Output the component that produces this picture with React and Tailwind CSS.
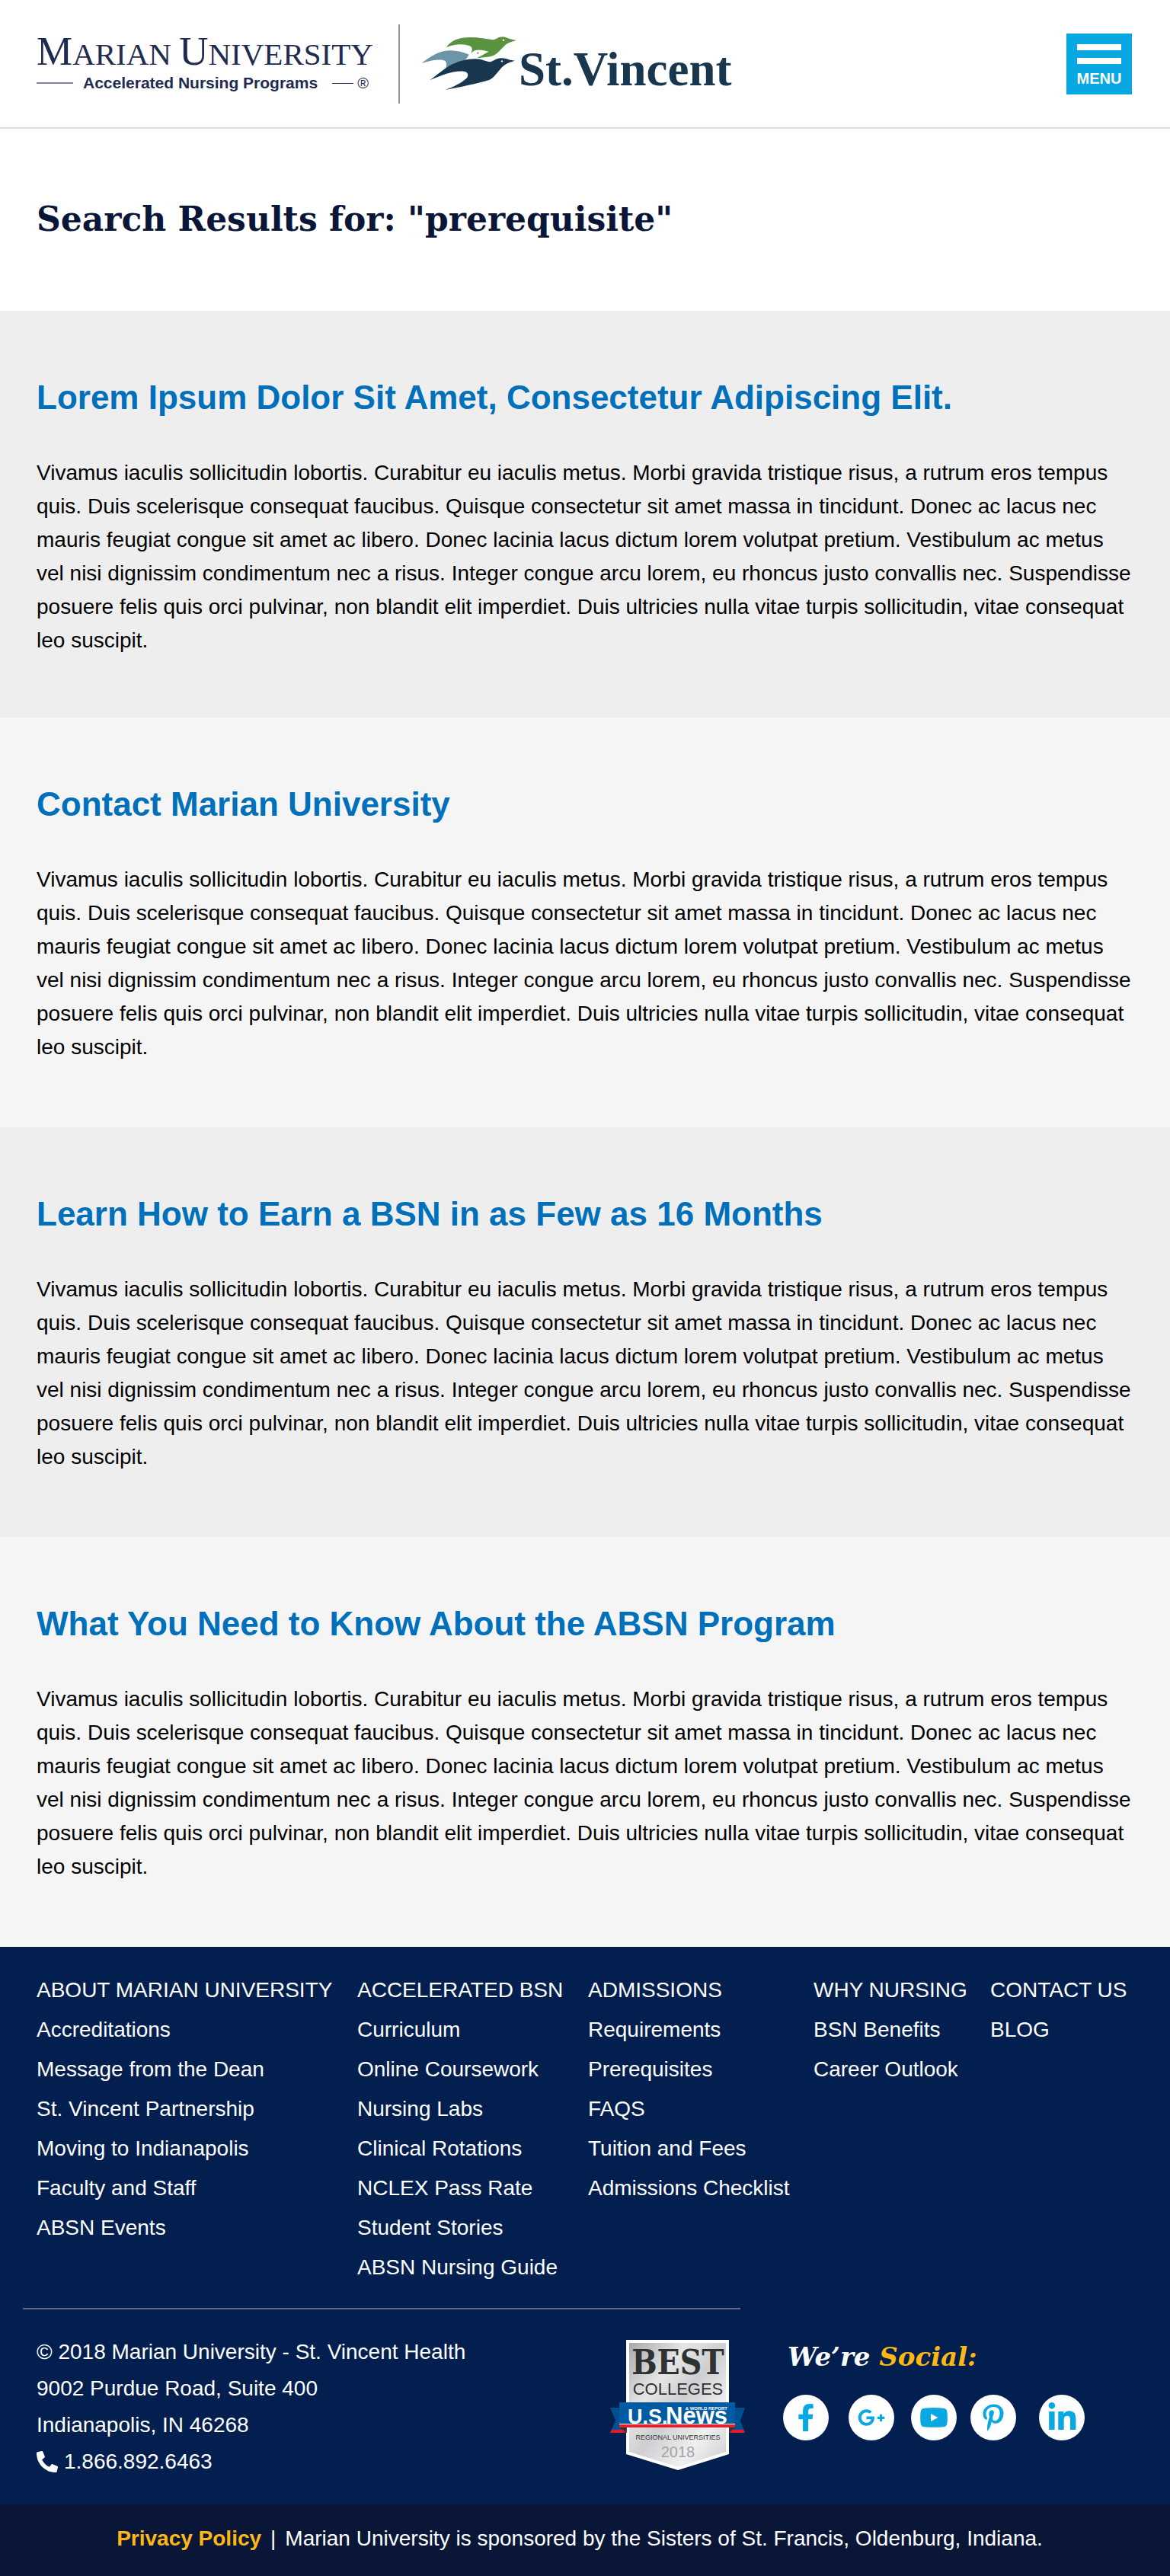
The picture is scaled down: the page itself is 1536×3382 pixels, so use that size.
import { FaFacebookF, FaGooglePlusG, FaPinterestP, FaLinkedinIn, FaPhone } from "react-icons/fa";

const PARAGRAPH =
  "Vivamus iaculis sollicitudin lobortis. Curabitur eu iaculis metus. Morbi gravida tristique risus, a rutrum eros tempus quis. Duis scelerisque consequat faucibus. Quisque consectetur sit amet massa in tincidunt. Donec ac lacus nec mauris feugiat congue sit amet ac libero. Donec lacinia lacus dictum lorem volutpat pretium. Vestibulum ac metus vel nisi dignissim condimentum nec a risus. Integer congue arcu lorem, eu rhoncus justo convallis nec. Suspendisse posuere felis quis orci pulvinar, non blandit elit imperdiet. Duis ultricies nulla vitae turpis sollicitudin, vitae consequat leo suscipit.";

const RESULTS = [
  "Lorem Ipsum Dolor Sit Amet, Consectetur Adipiscing Elit.",
  "Contact Marian University",
  "Learn How to Earn a BSN in as Few as 16 Months",
  "What You Need to Know About the ABSN Program",
];

const COLUMNS = [
  {
    title: "ABOUT MARIAN UNIVERSITY",
    width: "w-[421px]",
    links: ["Accreditations", "Message from the Dean", "St. Vincent Partnership", "Moving to Indianapolis", "Faculty and Staff", "ABSN Events"],
  },
  {
    title: "ACCELERATED BSN",
    width: "w-[303px]",
    links: ["Curriculum", "Online Coursework", "Nursing Labs", "Clinical Rotations", "NCLEX Pass Rate", "Student Stories", "ABSN Nursing Guide"],
  },
  {
    title: "ADMISSIONS",
    width: "w-[296px]",
    links: ["Requirements", "Prerequisites", "FAQS", "Tuition and Fees", "Admissions Checklist"],
  },
  { title: "WHY NURSING", width: "w-[232px]", links: ["BSN Benefits", "Career Outlook"] },
  { title: "CONTACT US", width: "", links: ["BLOG"] },
];

function Birds() {
  return (
    <svg viewBox="150 140 381 219" className="h-[73px] w-[127px] shrink-0" aria-hidden="true">
      <path
        fill="#5a9340"
        d="M252 185C268 160 300 146 345 146C380 146 410 152 436 156C450 154 456 144 473 144C486 144 492 150 504 153L527 158C515 163 500 164 488 173C468 190 452 216 428 221C412 225 392 226 373 227C390 219 402 210 419 202C404 200 392 195 376 196C362 196 356 202 349 209C355 196 356 186 344 180C318 168 280 174 252 185Z"
      />
      <circle cx="477" cy="157" r="3.5" fill="#fff" />
      <path
        fill="#6c95a9"
        d="M155 248C190 220 225 199 262 198C292 197 318 204 341 214C333 228 325 238 312 243C288 248 265 260 246 273C254 262 256 246 246 238C228 230 190 236 155 248Z"
      />
      <circle cx="376" cy="208" r="3.5" fill="#6c95a9" />
      <path
        fill="#18374f"
        d="M186 315C220 292 242 270 270 255C300 240 330 231 366 231C392 231 404 241 424 243C440 240 446 228 468 228C482 228 492 232 502 235L522 238C506 243 490 247 478 258C456 276 446 302 421 314C372 328 310 342 247 353C280 342 310 326 330 309C342 297 338 283 322 280C280 276 228 297 186 315Z"
      />
      <circle cx="471" cy="240" r="3.5" fill="#fff" />
    </svg>
  );
}

function Logos() {
  return (
    <a href="#home" className="flex items-start">
      <span className="block w-[436px] pt-[9px] text-[#1f2b50]">
        <span className="block whitespace-nowrap font-['Liberation_Serif',serif] text-[41px] leading-[52px]">
          <span className="text-[53px]">M</span>ARIAN <span className="text-[53px]">U</span>NIVERSITY
        </span>
        <span className="flex items-center whitespace-nowrap">
          <span className="h-[2px] w-12 bg-[#7f86a0]" />
          <span className="ml-[13px] text-[21px] font-bold leading-6">Accelerated Nursing Programs</span>
          <span className="ml-auto h-px w-7 bg-[#1f2b50]" />
          <span className="ml-[5px] text-[20px] leading-6">®</span>
        </span>
      </span>
      <span className="ml-[39px] h-[104px] w-[2px] bg-[#8f94b0]" />
      <span className="ml-[27px] mt-[15px] flex items-start text-[#18374f]">
        <Birds />
        <span className="ml-[2px] font-['Liberation_Serif',serif] text-[63px] font-bold leading-[88px]">St.Vincent</span>
      </span>
    </a>
  );
}

function Badge() {
  return (
    <svg viewBox="0 0 178 172" className="h-[172px] w-[178px]" role="img" aria-label="U.S. News Best Colleges Regional Universities 2018">
      <defs>
        <linearGradient id="silver" x1="0" y1="0" x2="1" y2="1">
          <stop offset="0" stopColor="#a9a9aa" />
          <stop offset="0.3" stopColor="#e6e6e7" />
          <stop offset="0.5" stopColor="#cfcfd1" />
          <stop offset="0.75" stopColor="#f0f0f1" />
          <stop offset="1" stopColor="#cdced0" />
        </linearGradient>
      </defs>
      <path d="M21 0H156V150L89 171L21 150Z" fill="#fff" />
      <path d="M25 4H152V147L89 167L25 147Z" fill="url(#silver)" />
      <path d="M0 89H22V122H0L7 106Z" fill="#004f8f" />
      <path d="M177 89H156V122H177L171 106Z" fill="#004f8f" />
      <path d="M2 118H22V122H0ZM175 118H156V122H177Z" fill="#e21b2d" />
      <path d="M13 115H21V122ZM164 115H156V122Z" fill="#333" />
      <rect x="12" y="82" width="152" height="33" fill="#005ba3" />
      <text x="89" y="45" textAnchor="middle" fontFamily="DejaVu Serif Condensed, DejaVu Serif, serif" fontWeight="bold" fontSize="44" fill="#2f3233">BEST</text>
      <text x="89" y="72" textAnchor="middle" fontFamily="Liberation Sans, sans-serif" fontSize="22" fill="#2f3233">COLLEGES</text>
      <text x="23" y="110" fontFamily="Liberation Sans, sans-serif" fontWeight="bold" fontSize="27" fill="#fff">U.S.</text>
      <text x="73" y="110" fontFamily="Liberation Sans, sans-serif" fontWeight="bold" fontSize="31" fill="#fff">News</text>
      <text x="154" y="92" textAnchor="end" fontFamily="Liberation Sans, sans-serif" fontWeight="bold" fontSize="6" fill="#fff">&amp; WORLD REPORT</text>
      <rect x="12" y="110" width="152" height="1" fill="#fff" />
      <rect x="12" y="111" width="152" height="4" fill="#ee1c25" />
      <text x="89" y="131" textAnchor="middle" fontFamily="Liberation Sans, sans-serif" fontSize="9" fill="#2f3233">REGIONAL UNIVERSITIES</text>
      <text x="89" y="154" textAnchor="middle" fontFamily="Liberation Sans, sans-serif" fontSize="20" fill="#a3a4a6">2018</text>
    </svg>
  );
}

function YouTube({ size }) {
  return (
    <svg viewBox="0 0 108 108" width={size} height={size} aria-hidden="true">
      <path
        fill="currentColor"
        fillRule="evenodd"
        d="M16 17Q54 13 92 17Q104 18 106 30Q109 54 106 78Q104 90 92 91Q54 94 16 91Q4 90 2 78Q-1 54 2 30Q4 18 16 17ZM42 39V69L70 54Z"
      />
    </svg>
  );
}

const SOCIAL = [
  { name: "Facebook", Icon: FaFacebookF, size: 36, gap: "" },
  { name: "Google Plus", Icon: FaGooglePlusG, size: 36, gap: "ml-[26px]" },
  { name: "YouTube", Icon: YouTube, size: 36, gap: "ml-[22px]" },
  { name: "Pinterest", Icon: FaPinterestP, size: 36, gap: "ml-[18px]" },
  { name: "LinkedIn", Icon: FaLinkedinIn, size: 41, gap: "ml-[30px]" },
];

export default function App() {
  return (
    <div className="bg-white font-['Liberation_Sans',Arial,sans-serif] text-[28px] text-black">
      <header className="flex items-start justify-between border-b-2 border-[#dddddb] pl-12 pr-[50px] pb-[31px] pt-8">
        <Logos />
        <button type="button" className="mt-3 flex h-20 w-[86px] flex-col items-center bg-[#0aa8e2] pt-[14px] text-[20px] font-bold leading-6 text-white">
          <span className="h-2 w-[58px] bg-white" />
          <span className="mt-[10px] h-2 w-[58px] bg-white" />
          <span className="mt-[7px]">MENU</span>
        </button>
      </header>

      <main>
        <div className="px-12 pb-[88px] pt-[87px]">
          <h1 className="font-[Georgia,'DejaVu_Serif',serif] text-[44px] font-bold leading-[64px] text-[#0a1638]">Search Results for: "prerequisite"</h1>
        </div>
        {RESULTS.map((title) => (
          <article key={title} className="px-12 pb-[83px] pt-[90px] first-of-type:pb-[79px] odd:bg-[#f5f5f5] even:bg-[#eeeeee]">
            <h2 className="text-[44px] font-bold leading-[48px] text-[#0070bb]">
              <a href="#result">{title}</a>
            </h2>
            <p className="mt-[53px] leading-[44px]">{PARAGRAPH}</p>
          </article>
        ))}
      </main>

      <footer className="text-white">
        <div className="bg-[#021f50] pb-8 pt-[31px]">
          <nav className="flex pl-12" aria-label="Footer">
            {COLUMNS.map((col) => (
              <div key={col.title} className={col.width}>
                <h3 className="whitespace-nowrap leading-[52px]">{col.title}</h3>
                <ul>
                  {col.links.map((link) => (
                    <li key={link} className="leading-[52px]">
                      <a href="#link">{link}</a>
                    </li>
                  ))}
                </ul>
              </div>
            ))}
          </nav>
          <hr className="ml-[30px] mt-[27px] w-[942px] border-t-2 border-[#65678a]" />
          <div className="flex items-start pl-12 pt-8">
            <address className="w-[753px] not-italic leading-[48px]">
              <p>© 2018 Marian University - St. Vincent Health</p>
              <p>9002 Purdue Road, Suite 400</p>
              <p>Indianapolis, IN 46268</p>
              <a href="tel:18668926463" className="flex items-center">
                <FaPhone className="mr-2 size-7 -scale-x-100" />
                1.866.892.6463
              </a>
            </address>
            <div className="mt-2">
              <Badge />
            </div>
            <div className="ml-[49px]">
              <h3 className="ml-1.5 font-[Georgia,'DejaVu_Serif',serif] text-[34px] font-bold italic leading-[60px]">
                We’re <span className="text-[#fdb813]">Social:</span>
              </h3>
              <div className="mt-5 flex">
                {SOCIAL.map(({ name, Icon, size, gap }) => (
                  <a key={name} href="#social" aria-label={name} className={"flex size-[60px] items-center justify-center rounded-full bg-white text-[#0aa8e2] " + gap}>
                    <Icon size={size} />
                  </a>
                ))}
              </div>
            </div>
          </div>
        </div>
        <div className="flex items-center justify-center bg-[#0a1638] pb-[27px] pr-[14px] pt-[23px] leading-[44px]">
          <a href="#privacy" className="font-bold text-[#fdb813]">Privacy Policy</a>
          <span className="mx-3">|</span>
          <span>Marian University is sponsored by the Sisters of St. Francis, Oldenburg, Indiana.</span>
        </div>
      </footer>
    </div>
  );
}
